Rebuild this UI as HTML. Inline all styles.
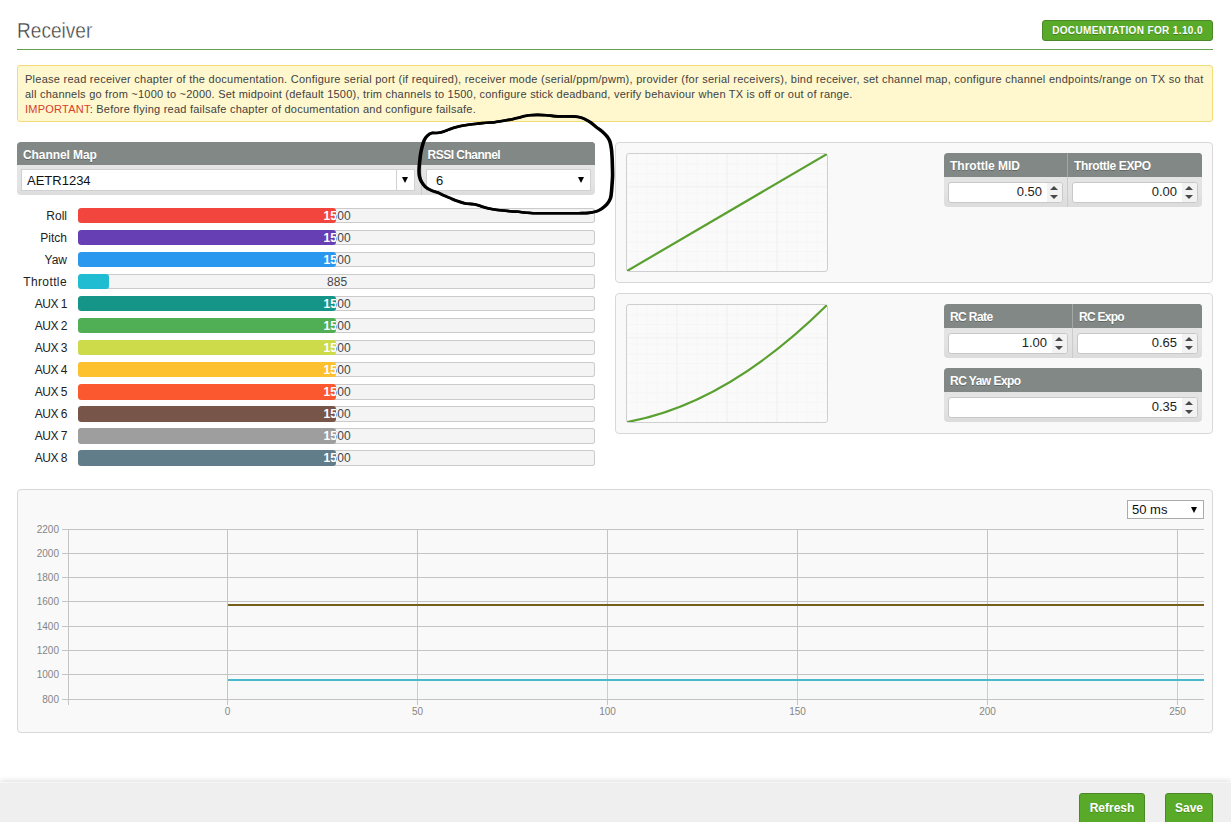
<!DOCTYPE html>
<html><head><meta charset="utf-8"><title>Receiver</title>
<style>
*{box-sizing:border-box;margin:0;padding:0}
html,body{width:1231px;height:822px;overflow:hidden;background:#fff}
body{position:relative;font-family:"Liberation Sans","DejaVu Sans",sans-serif;font-size:12px;color:#303030}
.abs{position:absolute}
#title{left:17.2px;top:18px;font-size:21.5px;color:#3c3c3c;-webkit-text-stroke:0.4px #fff;font-weight:normal;line-height:26px;white-space:nowrap;transform:scaleX(0.888);transform-origin:0 0}
#hr{left:17px;top:49px;width:1196px;height:1px;background:#66a04c}
#doc{left:1042px;top:20px;width:171px;height:21px;text-shadow:0 1px rgba(0,0,0,.25);background:#59aa29;border:1px solid #4c8829;border-radius:3px;color:#fff;font-weight:bold;font-size:10px;line-height:19px;text-align:center;letter-spacing:0.37px;white-space:nowrap}
#note{left:17px;top:65px;width:1196px;height:57px;background:#fff7cd;border:1px solid #f2dc7a;border-radius:3px;padding:6px 7px;font-size:11px;line-height:15px;color:#424242;white-space:nowrap}
#note b{font-weight:normal;color:#d8402a}
#note span{display:block}
.hdr{background:#828885;color:#fff;font-weight:bold;font-size:12px;line-height:22px;padding-left:6px;text-shadow:0 1px rgba(0,0,0,.25);white-space:nowrap}
.bodyg{background:linear-gradient(#e5e5e5,#e3e3e3 70%,#dcdcdc)}
.sel{background:#fff;border:1px solid #d0d0d0;font-size:13px;line-height:21px;color:#111;padding-left:5px;white-space:nowrap}
.sel i{position:absolute;right:7px;top:7px;width:0;height:0;border-left:3.5px solid transparent;border-right:3.5px solid transparent;border-top:6px solid #000}
.lbl{left:0;width:67px;text-align:right;font-size:12px;line-height:16px;color:#222;white-space:nowrap}
.bar{left:77.5px;width:517.5px;height:15.5px;background:#f4f4f4;box-shadow:inset 0 0 0 1px #cbcbcb;border-radius:3px;overflow:hidden}
.bar .f{position:absolute;left:0;top:0;height:15.5px;border-radius:3px;overflow:hidden}
.bar .t{position:absolute;left:0.9px;top:0;width:517.5px;text-align:center;line-height:16px;font-size:12px;color:#474747;letter-spacing:0.1px}
.bar .f .t{color:#fff;font-weight:bold}
.panel{background:#f9f9f9;border:1px solid #d8d8d8;border-radius:4px}
.canvas{background:#fafafa;border:1px solid #cfcfcf;border-radius:3px}
.num{background:#fff;border:1px solid #c8c8c8;border-radius:3px;font-size:13px;line-height:19px;text-align:right;color:#222}
.num span{position:absolute;right:20px;top:0;line-height:18px}
.num i.u,.num i.d{position:absolute;right:4.1px;width:0;height:0;border-left:4px solid transparent;border-right:4px solid transparent}
.num i.u{top:3.1px;border-bottom:4.5px solid #484848}
.num i.d{top:12.1px;border-top:4.5px solid #484848}
.num em{position:absolute;right:0;top:0;width:15px;height:19.5px;background:#f2f2f2;border-radius:0 3px 3px 0}
#bottom{left:0;top:782px;width:1231px;height:40px;background:#efefef;border-top:1px solid #f7f7f7;box-shadow:0 -2px 5px rgba(0,0,0,0.11)}
.btn{text-shadow:0 1px rgba(0,0,0,.2);background:#59aa29;border:1px solid #4c8829;border-radius:3px;color:#fff;font-weight:bold;font-size:12px;line-height:28.5px;text-align:center;height:32px;top:793px;white-space:nowrap}
</style></head><body>
<div id="title" class="abs">Receiver</div>
<div id="hr" class="abs"></div>
<div id="doc" class="abs">DOCUMENTATION FOR 1.10.0</div>
<div id="note" class="abs"><span style="letter-spacing:0.258px">Please read receiver chapter of the documentation. Configure serial port (if required), receiver mode (serial/ppm/pwm), provider (for serial receivers), bind receiver, set channel map, configure channel endpoints/range on TX so that</span><span style="letter-spacing:0.229px">all channels go from ~1000 to ~2000. Set midpoint (default 1500), trim channels to 1500, configure stick deadband, verify behaviour when TX is off or out of range.</span><span style="letter-spacing:0.233px"><b>IMPORTANT</b>: Before flying read failsafe chapter of documentation and configure failsafe.</span></div>

<!-- channel map -->
<div class="abs hdr" style="left:17px;top:142px;width:578px;height:23px;line-height:26px;overflow:hidden;border-radius:4px 4px 0 0;letter-spacing:-0.08px">Channel Map</div>
<div class="abs hdr" style="left:421px;top:142px;width:174px;height:23px;line-height:26px;overflow:hidden;border-radius:0 4px 0 0;padding-left:6.5px;letter-spacing:-0.5px">RSSI Channel</div>
<div class="abs bodyg" style="left:17px;top:165px;width:578px;height:29.5px;border-radius:0 0 4px 4px"></div>
<div class="abs" style="left:421px;top:165px;width:1px;height:29.5px;background:#ccc"></div>
<div class="abs sel" style="left:21px;top:169px;width:376px;height:21.5px">AETR1234</div>
<div class="abs sel" style="left:396px;top:169px;width:19px;height:21.5px;padding:0"><i style="right:6.3px;top:7px"></i></div>
<div class="abs sel" style="left:426px;top:169px;width:165px;height:21.5px;padding-left:9px">6<i style="right:6px;top:7px"></i></div>

<div class="abs lbl" style="top:207.5px;letter-spacing:0px">Roll</div>
<div class="abs bar" style="top:207.5px"><div class="t">1500</div><div class="f" style="width:258.3px;background:#f1453d"><div class="t">1500</div></div></div>
<div class="abs lbl" style="top:229.6px;letter-spacing:0px">Pitch</div>
<div class="abs bar" style="top:229.6px"><div class="t">1500</div><div class="f" style="width:258.3px;background:#673fb4"><div class="t">1500</div></div></div>
<div class="abs lbl" style="top:251.6px;letter-spacing:0px">Yaw</div>
<div class="abs bar" style="top:251.6px"><div class="t">1500</div><div class="f" style="width:258.3px;background:#2b98f0"><div class="t">1500</div></div></div>
<div class="abs lbl" style="top:273.7px;letter-spacing:0.39px">Throttle</div>
<div class="abs bar" style="top:273.7px"><div class="t">885</div><div class="f" style="width:31.3px;background:#1fbcd2"><div class="t">885</div></div></div>
<div class="abs lbl" style="top:295.7px;letter-spacing:-0.5px">AUX 1</div>
<div class="abs bar" style="top:295.7px"><div class="t">1500</div><div class="f" style="width:258.3px;background:#159588"><div class="t">1500</div></div></div>
<div class="abs lbl" style="top:317.8px;letter-spacing:-0.5px">AUX 2</div>
<div class="abs bar" style="top:317.8px"><div class="t">1500</div><div class="f" style="width:258.3px;background:#50ae55"><div class="t">1500</div></div></div>
<div class="abs lbl" style="top:339.9px;letter-spacing:-0.5px">AUX 3</div>
<div class="abs bar" style="top:339.9px"><div class="t">1500</div><div class="f" style="width:258.3px;background:#cdda49"><div class="t">1500</div></div></div>
<div class="abs lbl" style="top:361.9px;letter-spacing:-0.5px">AUX 4</div>
<div class="abs bar" style="top:361.9px"><div class="t">1500</div><div class="f" style="width:258.3px;background:#fdc02f"><div class="t">1500</div></div></div>
<div class="abs lbl" style="top:384.0px;letter-spacing:-0.5px">AUX 5</div>
<div class="abs bar" style="top:384.0px"><div class="t">1500</div><div class="f" style="width:258.3px;background:#fc5830"><div class="t">1500</div></div></div>
<div class="abs lbl" style="top:406.0px;letter-spacing:-0.5px">AUX 6</div>
<div class="abs bar" style="top:406.0px"><div class="t">1500</div><div class="f" style="width:258.3px;background:#785549"><div class="t">1500</div></div></div>
<div class="abs lbl" style="top:428.1px;letter-spacing:-0.5px">AUX 7</div>
<div class="abs bar" style="top:428.1px"><div class="t">1500</div><div class="f" style="width:258.3px;background:#9e9e9e"><div class="t">1500</div></div></div>
<div class="abs lbl" style="top:450.2px;letter-spacing:-0.5px">AUX 8</div>
<div class="abs bar" style="top:450.2px"><div class="t">1500</div><div class="f" style="width:258.3px;background:#617d8a"><div class="t">1500</div></div></div>


<!-- right panels -->
<div class="abs panel" style="left:615px;top:142px;width:598px;height:141px"></div>
<div class="abs panel" style="left:615px;top:293px;width:598px;height:141px"></div>
<div class="abs canvas" style="left:626px;top:153px;width:202px;height:119px"></div>
<div class="abs canvas" style="left:626px;top:304px;width:202px;height:119px"></div>
<svg class="abs" style="left:627px;top:154px" width="200" height="117" viewBox="0 0 200 117"><line x1="10.0" y1="0" x2="10.0" y2="117" stroke="#f6f6f6" stroke-width="1"/><line x1="20.0" y1="0" x2="20.0" y2="117" stroke="#f6f6f6" stroke-width="1"/><line x1="30.0" y1="0" x2="30.0" y2="117" stroke="#f6f6f6" stroke-width="1"/><line x1="40.0" y1="0" x2="40.0" y2="117" stroke="#f6f6f6" stroke-width="1"/><line x1="50.0" y1="0" x2="50.0" y2="117" stroke="#f6f6f6" stroke-width="1"/><line x1="60.0" y1="0" x2="60.0" y2="117" stroke="#f6f6f6" stroke-width="1"/><line x1="70.0" y1="0" x2="70.0" y2="117" stroke="#f6f6f6" stroke-width="1"/><line x1="80.0" y1="0" x2="80.0" y2="117" stroke="#f6f6f6" stroke-width="1"/><line x1="90.0" y1="0" x2="90.0" y2="117" stroke="#f6f6f6" stroke-width="1"/><line x1="100.0" y1="0" x2="100.0" y2="117" stroke="#f6f6f6" stroke-width="1"/><line x1="110.0" y1="0" x2="110.0" y2="117" stroke="#f6f6f6" stroke-width="1"/><line x1="120.0" y1="0" x2="120.0" y2="117" stroke="#f6f6f6" stroke-width="1"/><line x1="130.0" y1="0" x2="130.0" y2="117" stroke="#f6f6f6" stroke-width="1"/><line x1="140.0" y1="0" x2="140.0" y2="117" stroke="#f6f6f6" stroke-width="1"/><line x1="150.0" y1="0" x2="150.0" y2="117" stroke="#f6f6f6" stroke-width="1"/><line x1="160.0" y1="0" x2="160.0" y2="117" stroke="#f6f6f6" stroke-width="1"/><line x1="170.0" y1="0" x2="170.0" y2="117" stroke="#f6f6f6" stroke-width="1"/><line x1="180.0" y1="0" x2="180.0" y2="117" stroke="#f6f6f6" stroke-width="1"/><line x1="190.0" y1="0" x2="190.0" y2="117" stroke="#f6f6f6" stroke-width="1"/><line x1="0" y1="9.8" x2="200" y2="9.8" stroke="#f6f6f6" stroke-width="1"/><line x1="0" y1="19.5" x2="200" y2="19.5" stroke="#f6f6f6" stroke-width="1"/><line x1="0" y1="29.2" x2="200" y2="29.2" stroke="#f6f6f6" stroke-width="1"/><line x1="0" y1="39.0" x2="200" y2="39.0" stroke="#f6f6f6" stroke-width="1"/><line x1="0" y1="48.8" x2="200" y2="48.8" stroke="#f6f6f6" stroke-width="1"/><line x1="0" y1="58.5" x2="200" y2="58.5" stroke="#f6f6f6" stroke-width="1"/><line x1="0" y1="68.2" x2="200" y2="68.2" stroke="#f6f6f6" stroke-width="1"/><line x1="0" y1="78.0" x2="200" y2="78.0" stroke="#f6f6f6" stroke-width="1"/><line x1="0" y1="87.8" x2="200" y2="87.8" stroke="#f6f6f6" stroke-width="1"/><line x1="0" y1="97.5" x2="200" y2="97.5" stroke="#f6f6f6" stroke-width="1"/><line x1="0" y1="107.2" x2="200" y2="107.2" stroke="#f6f6f6" stroke-width="1"/><line x1="50.0" y1="0" x2="50.0" y2="117" stroke="#f0f0f0" stroke-width="1"/><line x1="100.0" y1="0" x2="100.0" y2="117" stroke="#f0f0f0" stroke-width="1"/><line x1="150.0" y1="0" x2="150.0" y2="117" stroke="#f0f0f0" stroke-width="1"/><line x1="0" y1="32.8" x2="200" y2="32.8" stroke="#f0f0f0" stroke-width="1"/><path d="M0,117 L200,0" stroke="#5aa030" stroke-width="2.2" fill="none"/></svg>
<svg class="abs" style="left:627px;top:305px" width="200" height="117" viewBox="0 0 200 117"><line x1="10.0" y1="0" x2="10.0" y2="117" stroke="#f6f6f6" stroke-width="1"/><line x1="20.0" y1="0" x2="20.0" y2="117" stroke="#f6f6f6" stroke-width="1"/><line x1="30.0" y1="0" x2="30.0" y2="117" stroke="#f6f6f6" stroke-width="1"/><line x1="40.0" y1="0" x2="40.0" y2="117" stroke="#f6f6f6" stroke-width="1"/><line x1="50.0" y1="0" x2="50.0" y2="117" stroke="#f6f6f6" stroke-width="1"/><line x1="60.0" y1="0" x2="60.0" y2="117" stroke="#f6f6f6" stroke-width="1"/><line x1="70.0" y1="0" x2="70.0" y2="117" stroke="#f6f6f6" stroke-width="1"/><line x1="80.0" y1="0" x2="80.0" y2="117" stroke="#f6f6f6" stroke-width="1"/><line x1="90.0" y1="0" x2="90.0" y2="117" stroke="#f6f6f6" stroke-width="1"/><line x1="100.0" y1="0" x2="100.0" y2="117" stroke="#f6f6f6" stroke-width="1"/><line x1="110.0" y1="0" x2="110.0" y2="117" stroke="#f6f6f6" stroke-width="1"/><line x1="120.0" y1="0" x2="120.0" y2="117" stroke="#f6f6f6" stroke-width="1"/><line x1="130.0" y1="0" x2="130.0" y2="117" stroke="#f6f6f6" stroke-width="1"/><line x1="140.0" y1="0" x2="140.0" y2="117" stroke="#f6f6f6" stroke-width="1"/><line x1="150.0" y1="0" x2="150.0" y2="117" stroke="#f6f6f6" stroke-width="1"/><line x1="160.0" y1="0" x2="160.0" y2="117" stroke="#f6f6f6" stroke-width="1"/><line x1="170.0" y1="0" x2="170.0" y2="117" stroke="#f6f6f6" stroke-width="1"/><line x1="180.0" y1="0" x2="180.0" y2="117" stroke="#f6f6f6" stroke-width="1"/><line x1="190.0" y1="0" x2="190.0" y2="117" stroke="#f6f6f6" stroke-width="1"/><line x1="0" y1="9.8" x2="200" y2="9.8" stroke="#f6f6f6" stroke-width="1"/><line x1="0" y1="19.5" x2="200" y2="19.5" stroke="#f6f6f6" stroke-width="1"/><line x1="0" y1="29.2" x2="200" y2="29.2" stroke="#f6f6f6" stroke-width="1"/><line x1="0" y1="39.0" x2="200" y2="39.0" stroke="#f6f6f6" stroke-width="1"/><line x1="0" y1="48.8" x2="200" y2="48.8" stroke="#f6f6f6" stroke-width="1"/><line x1="0" y1="58.5" x2="200" y2="58.5" stroke="#f6f6f6" stroke-width="1"/><line x1="0" y1="68.2" x2="200" y2="68.2" stroke="#f6f6f6" stroke-width="1"/><line x1="0" y1="78.0" x2="200" y2="78.0" stroke="#f6f6f6" stroke-width="1"/><line x1="0" y1="87.8" x2="200" y2="87.8" stroke="#f6f6f6" stroke-width="1"/><line x1="0" y1="97.5" x2="200" y2="97.5" stroke="#f6f6f6" stroke-width="1"/><line x1="0" y1="107.2" x2="200" y2="107.2" stroke="#f6f6f6" stroke-width="1"/><line x1="50.0" y1="0" x2="50.0" y2="117" stroke="#f0f0f0" stroke-width="1"/><line x1="100.0" y1="0" x2="100.0" y2="117" stroke="#f0f0f0" stroke-width="1"/><line x1="150.0" y1="0" x2="150.0" y2="117" stroke="#f0f0f0" stroke-width="1"/><line x1="0" y1="32.8" x2="200" y2="32.8" stroke="#f0f0f0" stroke-width="1"/><path d="M0,117 Q100.0,98.9 200,0" stroke="#5aa030" stroke-width="2.2" fill="none"/></svg>

<div class="abs bodyg" style="left:944px;top:153px;width:258px;height:54px;border-radius:4px"></div>
<div class="abs hdr" style="left:944px;top:153px;width:258px;height:24px;line-height:26.5px;overflow:hidden;border-radius:4px 4px 0 0">Throttle MID</div>
<div class="abs hdr" style="left:1067px;top:153px;width:135px;height:24px;line-height:26.5px;overflow:hidden;border-radius:0 4px 0 0;border-left:1px solid #a3a8a6;letter-spacing:-0.36px">Throttle EXPO</div>
<div class="abs" style="left:1067px;top:177px;width:1px;height:30px;background:#ccc"></div>
<div class="abs num" style="left:948px;top:181.5px;width:115px;height:21.5px"><em></em><span>0.50</span><i class="u"></i><i class="d"></i></div>
<div class="abs num" style="left:1072px;top:181.5px;width:126px;height:21.5px"><em></em><span>0.00</span><i class="u"></i><i class="d"></i></div>

<div class="abs bodyg" style="left:944px;top:304px;width:258px;height:54px;border-radius:4px"></div>
<div class="abs hdr" style="left:944px;top:304px;width:258px;height:24px;line-height:26.5px;overflow:hidden;border-radius:4px 4px 0 0;letter-spacing:-0.6px">RC Rate</div>
<div class="abs hdr" style="left:1072px;top:304px;width:130px;height:24px;line-height:26.5px;overflow:hidden;border-radius:0 4px 0 0;border-left:1px solid #a3a8a6;letter-spacing:-0.73px">RC Expo</div>
<div class="abs" style="left:1072px;top:328px;width:1px;height:30px;background:#ccc"></div>
<div class="abs num" style="left:948px;top:332.5px;width:120px;height:21.5px"><em></em><span>1.00</span><i class="u"></i><i class="d"></i></div>
<div class="abs num" style="left:1077px;top:332.5px;width:121px;height:21.5px"><em></em><span>0.65</span><i class="u"></i><i class="d"></i></div>

<div class="abs bodyg" style="left:944px;top:368px;width:258px;height:54px;border-radius:4px"></div>
<div class="abs hdr" style="left:944px;top:368px;width:258px;height:24px;line-height:26.5px;overflow:hidden;border-radius:4px 4px 0 0;letter-spacing:-0.53px">RC Yaw Expo</div>
<div class="abs num" style="left:948px;top:396.5px;width:250px;height:21.5px"><em></em><span>0.35</span><i class="u"></i><i class="d"></i></div>

<!-- plot -->
<div class="abs panel" style="left:17px;top:489px;width:1196px;height:244px"></div>
<div class="abs sel" style="left:1127px;top:500px;width:77px;height:19px;line-height:17px;padding-left:4px;border-color:#ababab">50 ms<i style="top:6px;right:6px"></i></div>
<svg class="abs" style="left:0;top:480px" width="1231" height="260" viewBox="0 480 1231 260" font-family="'Liberation Sans',sans-serif" font-size="10" fill="#858585"><line x1="62" y1="529.5" x2="1204" y2="529.5" stroke="#c4c4c4" stroke-width="1"/><text x="59" y="533.0" text-anchor="end">2200</text><line x1="62" y1="553.5" x2="1204" y2="553.5" stroke="#c4c4c4" stroke-width="1"/><text x="59" y="557.0" text-anchor="end">2000</text><line x1="62" y1="577.5" x2="1204" y2="577.5" stroke="#c4c4c4" stroke-width="1"/><text x="59" y="581.0" text-anchor="end">1800</text><line x1="62" y1="601.5" x2="1204" y2="601.5" stroke="#c4c4c4" stroke-width="1"/><text x="59" y="605.0" text-anchor="end">1600</text><line x1="62" y1="626.5" x2="1204" y2="626.5" stroke="#c4c4c4" stroke-width="1"/><text x="59" y="630.0" text-anchor="end">1400</text><line x1="62" y1="650.5" x2="1204" y2="650.5" stroke="#c4c4c4" stroke-width="1"/><text x="59" y="654.0" text-anchor="end">1200</text><line x1="62" y1="674.5" x2="1204" y2="674.5" stroke="#c4c4c4" stroke-width="1"/><text x="59" y="678.0" text-anchor="end">1000</text><line x1="62" y1="699.5" x2="1204" y2="699.5" stroke="#c4c4c4" stroke-width="1"/><text x="59" y="703.0" text-anchor="end">800</text><line x1="68.5" y1="529" x2="68.5" y2="705" stroke="#c4c4c4" stroke-width="1"/><line x1="227.5" y1="529" x2="227.5" y2="705" stroke="#c4c4c4" stroke-width="1"/><text x="227.5" y="715.3" text-anchor="middle">0</text><line x1="417.5" y1="529" x2="417.5" y2="705" stroke="#c4c4c4" stroke-width="1"/><text x="417.5" y="715.3" text-anchor="middle">50</text><line x1="607.5" y1="529" x2="607.5" y2="705" stroke="#c4c4c4" stroke-width="1"/><text x="607.5" y="715.3" text-anchor="middle">100</text><line x1="797.5" y1="529" x2="797.5" y2="705" stroke="#c4c4c4" stroke-width="1"/><text x="797.5" y="715.3" text-anchor="middle">150</text><line x1="987.5" y1="529" x2="987.5" y2="705" stroke="#c4c4c4" stroke-width="1"/><text x="987.5" y="715.3" text-anchor="middle">200</text><line x1="1177.5" y1="529" x2="1177.5" y2="705" stroke="#c4c4c4" stroke-width="1"/><text x="1177.5" y="715.3" text-anchor="middle">250</text><rect x="228" y="680" width="976" height="19" fill="#eef8f9" opacity="0.2"/><line x1="228" y1="605" x2="1204" y2="605" stroke="#75601b" stroke-width="2"/><line x1="228" y1="680" x2="1204" y2="680" stroke="#48bacc" stroke-width="2"/></svg>

<div id="bottom" class="abs"></div>
<div class="abs btn" style="left:1079px;width:66px">Refresh</div>
<div class="abs btn" style="left:1165px;width:48px">Save</div>

<svg class="abs" style="left:0;top:0" width="1231" height="822" viewBox="0 0 1231 822"><g fill="none" stroke="#000" stroke-width="2.6" stroke-linejoin="round"><path d="M431.9,133.0C433.4,132.6 434.7,133.1 436.3,133.0C437.9,132.9 439.7,132.7 441.4,132.3C443.1,131.9 444.7,131.2 446.5,130.5C448.3,129.8 450.1,129.0 452.3,128.3C454.5,127.6 456.9,126.8 459.6,126.2C462.3,125.6 465.5,125.1 468.4,124.7C471.3,124.3 474.2,124.0 477.1,123.7C480.0,123.4 483.0,123.0 485.9,122.8C488.8,122.5 491.7,122.5 494.6,122.2C497.5,121.9 500.8,121.2 503.4,120.8C506.0,120.4 507.7,120.0 510.0,119.6C512.3,119.1 515.1,118.6 517.3,118.1C519.5,117.6 521.1,116.9 523.1,116.4C525.1,115.9 526.6,115.5 529.0,115.2C531.4,115.0 534.8,114.9 537.7,114.9C540.6,114.9 543.8,115.0 546.5,115.2C549.2,115.4 551.1,115.9 553.8,116.1C556.5,116.3 559.6,116.4 562.5,116.4C565.4,116.5 568.6,116.3 571.3,116.4C574.0,116.5 576.4,116.6 578.6,117.0C580.8,117.4 582.5,118.0 584.4,118.9C586.3,119.8 588.2,120.9 590.2,122.2C592.2,123.5 594.2,125.4 596.1,126.9C598.0,128.4 600.1,129.7 601.9,131.3C603.7,132.9 605.7,134.7 607.0,136.4C608.3,138.1 609.2,139.4 609.9,141.5C610.6,143.6 611.0,146.1 611.4,148.8C611.8,151.5 611.9,154.6 612.1,157.5C612.3,160.4 612.3,163.4 612.4,166.3C612.5,169.2 612.6,172.1 612.6,175.0C612.6,177.9 612.3,180.9 612.1,183.8C611.9,186.7 611.7,190.1 611.4,192.5C611.1,194.9 611.1,196.5 610.4,198.4C609.7,200.3 608.4,202.5 607.0,204.2C605.6,205.9 603.7,207.4 601.9,208.6C600.1,209.8 598.3,210.8 596.1,211.5C593.9,212.2 591.7,212.6 588.8,212.9C585.9,213.2 582.0,213.1 578.6,213.2C575.2,213.2 572.0,213.2 568.4,213.2C564.8,213.2 560.6,213.2 556.7,213.2C552.8,213.2 548.9,213.2 545.0,213.2C541.1,213.2 536.5,213.3 533.3,213.2C530.1,213.1 528.4,212.9 526.0,212.7C523.6,212.5 521.5,212.1 518.8,211.8C516.1,211.6 513.5,211.5 510.0,211.2C506.4,210.9 501.0,210.4 497.5,210.0C494.0,209.6 491.5,209.2 488.8,208.6C486.1,208.0 483.9,207.1 481.5,206.4C479.1,205.7 476.9,204.7 474.2,204.2C471.5,203.7 468.1,204.0 465.4,203.5C462.7,203.0 460.5,202.2 458.1,201.3C455.7,200.5 453.2,199.4 450.8,198.4C448.4,197.4 445.8,196.4 443.6,195.4C441.4,194.4 439.8,193.3 437.7,192.5C435.6,191.7 433.3,191.3 431.2,190.3C429.1,189.3 426.9,188.1 425.3,186.7C423.7,185.2 422.4,183.3 421.4,181.6C420.4,179.9 419.9,178.3 419.5,176.5C419.1,174.7 419.0,172.8 419.0,170.6C419.0,168.4 419.2,166.1 419.5,163.4C419.8,160.7 420.1,157.3 420.5,154.6C420.9,151.9 421.4,149.7 422.0,147.3C422.6,144.9 423.4,141.9 424.3,140.0C425.2,138.1 426.2,136.8 427.5,135.6C428.8,134.4 430.4,133.4 431.9,133.0Z" transform="translate(-0.5,0)"/><path d="M431.9,133.0C433.4,132.6 434.7,133.1 436.3,133.0C437.9,132.9 439.7,132.7 441.4,132.3C443.1,131.9 444.7,131.2 446.5,130.5C448.3,129.8 450.1,129.0 452.3,128.3C454.5,127.6 456.9,126.8 459.6,126.2C462.3,125.6 465.5,125.1 468.4,124.7C471.3,124.3 474.2,124.0 477.1,123.7C480.0,123.4 483.0,123.0 485.9,122.8C488.8,122.5 491.7,122.5 494.6,122.2C497.5,121.9 500.8,121.2 503.4,120.8C506.0,120.4 507.7,120.0 510.0,119.6C512.3,119.1 515.1,118.6 517.3,118.1C519.5,117.6 521.1,116.9 523.1,116.4C525.1,115.9 526.6,115.5 529.0,115.2C531.4,115.0 534.8,114.9 537.7,114.9C540.6,114.9 543.8,115.0 546.5,115.2C549.2,115.4 551.1,115.9 553.8,116.1C556.5,116.3 559.6,116.4 562.5,116.4C565.4,116.5 568.6,116.3 571.3,116.4C574.0,116.5 576.4,116.6 578.6,117.0C580.8,117.4 582.5,118.0 584.4,118.9C586.3,119.8 588.2,120.9 590.2,122.2C592.2,123.5 594.2,125.4 596.1,126.9C598.0,128.4 600.1,129.7 601.9,131.3C603.7,132.9 605.7,134.7 607.0,136.4C608.3,138.1 609.2,139.4 609.9,141.5C610.6,143.6 611.0,146.1 611.4,148.8C611.8,151.5 611.9,154.6 612.1,157.5C612.3,160.4 612.3,163.4 612.4,166.3C612.5,169.2 612.6,172.1 612.6,175.0C612.6,177.9 612.3,180.9 612.1,183.8C611.9,186.7 611.7,190.1 611.4,192.5C611.1,194.9 611.1,196.5 610.4,198.4C609.7,200.3 608.4,202.5 607.0,204.2C605.6,205.9 603.7,207.4 601.9,208.6C600.1,209.8 598.3,210.8 596.1,211.5C593.9,212.2 591.7,212.6 588.8,212.9C585.9,213.2 582.0,213.1 578.6,213.2C575.2,213.2 572.0,213.2 568.4,213.2C564.8,213.2 560.6,213.2 556.7,213.2C552.8,213.2 548.9,213.2 545.0,213.2C541.1,213.2 536.5,213.3 533.3,213.2C530.1,213.1 528.4,212.9 526.0,212.7C523.6,212.5 521.5,212.1 518.8,211.8C516.1,211.6 513.5,211.5 510.0,211.2C506.4,210.9 501.0,210.4 497.5,210.0C494.0,209.6 491.5,209.2 488.8,208.6C486.1,208.0 483.9,207.1 481.5,206.4C479.1,205.7 476.9,204.7 474.2,204.2C471.5,203.7 468.1,204.0 465.4,203.5C462.7,203.0 460.5,202.2 458.1,201.3C455.7,200.5 453.2,199.4 450.8,198.4C448.4,197.4 445.8,196.4 443.6,195.4C441.4,194.4 439.8,193.3 437.7,192.5C435.6,191.7 433.3,191.3 431.2,190.3C429.1,189.3 426.9,188.1 425.3,186.7C423.7,185.2 422.4,183.3 421.4,181.6C420.4,179.9 419.9,178.3 419.5,176.5C419.1,174.7 419.0,172.8 419.0,170.6C419.0,168.4 419.2,166.1 419.5,163.4C419.8,160.7 420.1,157.3 420.5,154.6C420.9,151.9 421.4,149.7 422.0,147.3C422.6,144.9 423.4,141.9 424.3,140.0C425.2,138.1 426.2,136.8 427.5,135.6C428.8,134.4 430.4,133.4 431.9,133.0Z" transform="translate(0.5,0)"/></g></svg>
</body></html>
